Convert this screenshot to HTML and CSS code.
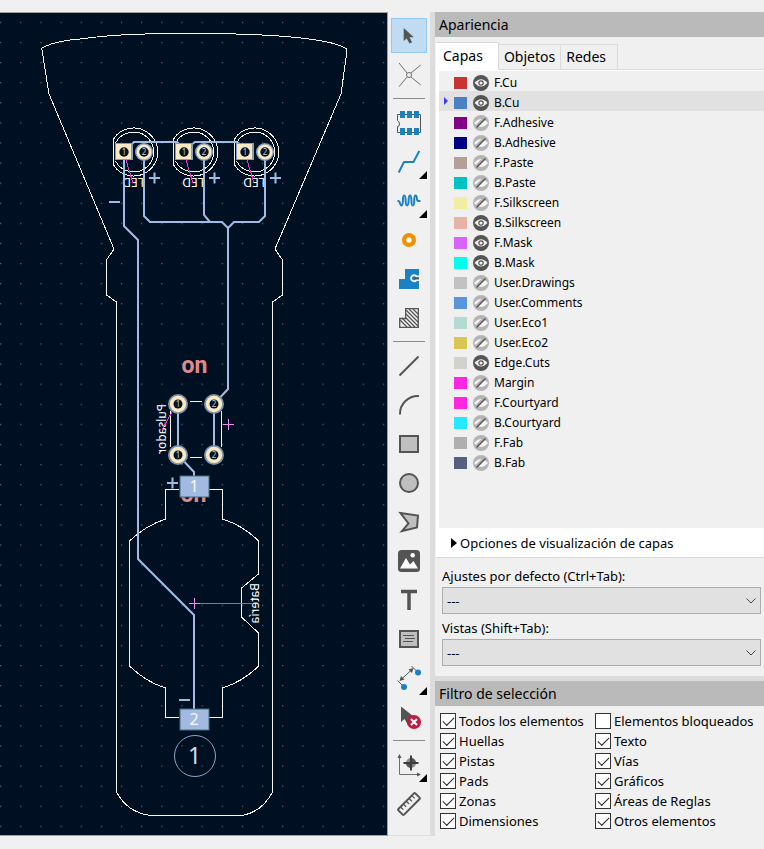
FILE: index.html
```html
<!DOCTYPE html>
<html lang="es">
<head>
<meta charset="utf-8">
<title>Editor de placas</title>
<meta name="viewport" content="width=device-width, initial-scale=1">
<link rel="stylesheet" href="styles.css">
</head>
<body>
<main class="workspace">
  <section class="board">
    <svg class="board-drawing" viewBox="0 13 387 822">
      <defs>
        <pattern id="grid" x="10.6" y="12.2" width="20.15" height="20.1" patternUnits="userSpaceOnUse">
          <rect x="9.6" y="9.6" width="1.200" height="1.200" fill="#5d6c76"/>
        </pattern>
        <g id="led">
          <path class="silk" d="M113.500 139V165M113.500 139A24 24 0 1 1 113.500 165M115.500 143A20.500 20.500 0 0 1 147 137A20.500 20.500 0 0 1 147 167A20.500 20.500 0 0 1 115.500 161"/>
        </g>
        <g id="led-pads">
          <rect x="115" y="143" width="18" height="17" fill="#86a0b8"/>
          <rect x="116" y="144" width="15" height="15" fill="#f8e9c4"/>
          <circle cx="124" cy="152" r="4.700" fill="#08131f"/>
          <circle cx="144" cy="152" r="9" fill="#86a0b8"/>
          <circle cx="144" cy="152" r="7.500" fill="#f8e9c4"/>
          <circle cx="144" cy="152" r="4.700" fill="#08131f"/>
          <text class="pin" x="124" y="155">1</text>
          <text class="pin" x="144" y="155">2</text>
          <path class="airwire" d="M126 160L133 183"/>
          <path class="mark" d="M149 178H160M154.500 172.500V183.500"/>
        </g>
        <g id="hole">
          <circle r="10" fill="#7d93a8"/>
          <circle r="8.200" fill="#f8e9c4"/>
          <circle r="4.500" fill="#08131f"/>
        </g>
      </defs>
      <rect y="13" width="387" height="822" fill="url(#grid)"/>
      <path class="edge" d="M42 50Q41 48 44 47C52 43 66 40 80 39C115 34 150 33.500 194 33.500S285 35 316 40C328 42 336 43 343 47Q347 48 347 51L341 94L275 249L282.500 260V295L272.500 302V792Q262 812 242 815.500H150Q127 812 116.500 792V302L106.500 295V260L114 249L49 94Z"/>
      <use href="#led"/><use href="#led" x="60"/><use href="#led" x="121"/>
      <g class="silk-text">
        <text transform="translate(144 178) rotate(180)">LED</text>
        <text transform="translate(204 178) rotate(180)">LED</text>
        <text transform="translate(265 178) rotate(180)">LED</text>
        <text transform="matrix(0 1 1 0 166 404)">Pulsador</text>
        <text transform="matrix(0 1 1 0 259 583)">Batería</text>
      </g>
      <text class="switch-text" x="194.500" y="373">on</text>
      <text class="switch-text" x="193.500" y="502">on</text>
      <path class="silk" d="M190 401.500H202M190 457.500H202M170.500 411V447M221.500 411V447"/>
      <path class="silk" d="M179 489.500H165.500V519Q145 526 129.500 541V666Q146 682 165.500 688V717.500H179M209 489.500H222.500V519Q244 526 258.500 541V574L241.500 588V617L258.500 633V666Q244 681 222.500 688V717.500H209"/>
      <path class="track" d="M124 160V226L138 240V559L194 615V710M144 160V216L150 222H222L228 228L234 222H259L265 216V160M204 160V215L210 222M228 228V389L214 404V455M131 145L134 142H177L180 145M191 145L195 142H237L241 145M178 404V455L194 472V477"/>
      <use href="#led-pads"/><use href="#led-pads" x="60"/><use href="#led-pads" x="121"/>
      <use href="#hole" x="178" y="404"/><use href="#hole" x="214" y="404"/>
      <use href="#hole" x="178" y="455"/><use href="#hole" x="214" y="455"/>
      <text class="pin" x="178" y="407">1</text><text class="pin" x="214" y="407">2</text>
      <text class="pin" x="178" y="458">1</text><text class="pin" x="214" y="458">2</text>
      <path class="airwire" d="M172 412L162 430M195 603.500H252"/>
      <path class="anchor" d="M223 424.500H234M228.500 419V430M189 603.500H200M194.500 598V609"/>
      <path class="mark" d="M109 202H120M167 483H178M172.500 477.500V488.500M179 700H190"/>
      <rect class="smd" x="180" y="476" width="29" height="21"/>
      <rect class="smd" x="180" y="709" width="29" height="21"/>
      <text class="smd-text" x="194" y="492">1</text>
      <text class="smd-text" x="194" y="725">2</text>
      <circle cx="195" cy="756" r="20.500" fill="none" stroke="#8ca5c4"/>
      <text class="npth-text" x="194.500" y="764">1</text>
    </svg>
  </section>

  <nav class="toolbar" aria-label="Herramientas">
    <button class="tool active" aria-label="Seleccionar"><svg viewBox="-18 -18 36 35"><path class="solid" d="M-5.300-8V5L-2.300 2.400L.5 7.600L3 6.300L.5 1.300H4.800Z"/></svg></button>
    <button class="tool" aria-label="Red de conexiones"><svg viewBox="-18 -18 36 35"><path class="thin" d="M-10-12L-2-2M11.700-10L2-2M-10 11.700L-2 2M11.700 10L2 2"/><circle class="thin" r="2.500"/></svg></button>
    <hr>
    <button class="tool" aria-label="Añadir huella"><svg viewBox="-18 -18 36 35"><path class="thin dark" d="M-11.500-8.500H11.500V9.500H-11.500V3.500Q-9.500 3.500-9.500 1T-11.500-2.500Z"/><path fill="#1a81c4" d="M-9-12h5v7h-5ZM-2-12h5v7h-5ZM5-12h5v7h-5ZM-9 5h5v7h-5ZM-2 5h5v7h-5ZM5 5h5v7h-5Z"/></svg></button>
    <button class="tool more" aria-label="Trazar pista"><svg viewBox="-18 -18 36 35"><path class="blue" d="M-10.300 10.500L-5 0H4.500L10.300-11"/></svg></button>
    <button class="tool more" aria-label="Ajustar longitud"><svg viewBox="-18 -18 36 35"><path class="blue" d="M-11.500 0H-10.500C-8.500 0-9.500 4.500-7.500 4.500C-5 4.500-7.200-5.500-4.800-5.500C-2.200-5.500-4.500 4.500-2 4.500C.800 4.500-1.500-5.500 1-5.500C3.500-5.500 1.300 4.500 3.800 4.500C6.500 4.500 4-5.500 6.500-5.500C9 -5.500 6.500 0 9.500 0H11.500"/></svg></button>
    <button class="tool" aria-label="Añadir vía"><svg viewBox="-18 -18 36 35"><circle r="4.900" fill="#fff" stroke="#f29100" stroke-width="4.300"/></svg></button>
    <button class="tool" aria-label="Añadir zona"><svg viewBox="-18 -18 36 35"><path fill="#1a81c4" d="M-10 0H-4V-10H10V10H-10Z"/><path fill="#efefef" d="M10-3.500H8A4 4 0 1 0 8 2H10Z"/><circle cx="5" cy="-.700" r="2" fill="#1a81c4"/><path d="M5-.700H10" fill="none" stroke="#545454" stroke-width="2.200"/></svg></button>
    <button class="tool" aria-label="Añadir área de reglas"><svg viewBox="-18 -18 36 35"><path class="medium" d="M-9.300.500H-3.300V-9.300H9.300V9.300H-9.300Z"/><path class="medium" d="M-9 2L-2 9M-7 0L2 9M-3 0L6 9M-3-4L9 8M-3-8L9 4M0-9L9 0M4-9L9-4"/></svg></button>
    <hr>
    <button class="tool" aria-label="Dibujar línea"><svg viewBox="-18 -18 36 35"><path class="stroke" d="M-9.500 9.500L9.500-9.500"/></svg></button>
    <button class="tool" aria-label="Dibujar arco"><svg viewBox="-18 -18 36 35"><path class="stroke" d="M-9 9.500A18 18 0 0 1 10-9"/></svg></button>
    <button class="tool" aria-label="Dibujar rectángulo"><svg viewBox="-18 -18 36 35"><rect class="shape" x="-9" y="-8" width="18" height="16"/></svg></button>
    <button class="tool" aria-label="Dibujar círculo"><svg viewBox="-18 -18 36 35"><circle class="shape" r="9"/></svg></button>
    <button class="tool" aria-label="Dibujar polígono"><svg viewBox="-18 -18 36 35"><path class="shape" d="M-8.500-9L9-6.500L8 5.500L-7 9L-.500 1.500Z"/></svg></button>
    <button class="tool" aria-label="Añadir imagen"><svg viewBox="-18 -18 36 35"><rect class="solid" x="-11" y="-11" width="22" height="22" rx="3.500"/><circle cx="3.700" cy="-5.700" r="2.200" fill="#fff"/><path fill="#fff" d="M-9 7.500L-3-3L1 3.500L4.500 0L9 7.500Z"/></svg></button>
    <button class="tool" aria-label="Añadir texto"><svg viewBox="-18 -18 36 35"><path d="M-8-8.500H8M0-8V10" fill="none" stroke="#545454" stroke-width="3.500"/></svg></button>
    <button class="tool" aria-label="Añadir cuadro de texto"><svg viewBox="-18 -18 36 35"><rect class="shape" x="-9" y="-8" width="18" height="16"/><path class="thin dark" d="M-6-3.500H5M-4-.500H6M-6 2.500H4"/></svg></button>
    <button class="tool more" aria-label="Añadir cota"><svg viewBox="-18 -18 36 35"><path class="thin dark" d="M-11.500 2.500L-5 9M2.500-12L9-5.500M-8.500 2L3-8.500"/><path class="solid" d="M-9.500 3L-8-2L-4.500 1.500ZM4.500-10L3-5L-.500-8.500Z"/><circle cx="9" cy="-5.500" r="3" fill="#1a81c4"/><circle cx="-5" cy="9" r="3" fill="#1a81c4"/></svg></button>
    <button class="tool" aria-label="Borrar elementos"><svg viewBox="-18 -18 36 35"><path class="solid" d="M-8-10.500V5L-4.500 2L-1 8L2 6V0L4-1Z"/><circle cx="5" cy="5" r="7" fill="#c2193f"/><path d="M2 2L8 8M8 2L2 8" stroke="#fff" stroke-width="2.200"/></svg></button>
    <hr>
    <button class="tool more" aria-label="Fijar origen"><svg viewBox="-18 -18 36 35"><path class="thin" d="M-9.500-8V9.500H9"/><path class="solid" d="M-9.500-11L-7.500-7H-11.500ZM12 9.500L8 7.500V11.500Z"/><circle cx="2" cy="-2" r="5" fill="#8a8a8a"/><path class="solid" d="M2-2V-7A5 5 0 0 1 7-2ZM2-2V3A5 5 0 0 1-3-2Z"/><path d="M-5.500-2H9.500M2-9.500V5.500" stroke="#3c3c3c" stroke-width="2"/></svg></button>
    <button class="tool" aria-label="Medir"><svg viewBox="-18 -18 36 35"><g transform="rotate(-45)"><rect x="-12" y="-4" width="24" height="8" rx="1" fill="none" stroke="#545454" stroke-width="2"/><path class="medium" d="M-8-3.500V0M-4-3.500V0M0-3.500V0M4-3.500V0M8-3.500V0"/></g></svg></button>
  </nav>

  <aside class="side">
    <section class="appearance">
      <h2 class="title">Apariencia</h2>
      <div class="tabs" role="tablist">
        <button class="tab selected" role="tab" aria-selected="true">Capas</button>
        <button class="tab" role="tab" aria-selected="false">Objetos</button>
        <button class="tab" role="tab" aria-selected="false">Redes</button>
      </div>
      <div class="page">
        <ul class="layers" id="layers"></ul>
        <button class="options"><svg viewBox="0 0 6 10"><path d="M0 0L6 5L0 10Z"/></svg>Opciones de visualización de capas</button>
      </div>
      <div class="presets">
        <label for="preset">Ajustes por defecto (Ctrl+Tab):</label>
        <div class="select"><select id="preset"><option>---</option></select><svg viewBox="0 0 10 6"><path d="M.5.500L5 5L9.500.500"/></svg></div>
        <label for="viewport">Vistas (Shift+Tab):</label>
        <div class="select"><select id="viewport"><option>---</option></select><svg viewBox="0 0 10 6"><path d="M.5.500L5 5L9.500.500"/></svg></div>
      </div>
    </section>
    <section class="filter">
      <h2 class="title">Filtro de selección</h2>
      <div class="checks">
        <label><input type="checkbox" checked>Todos los elementos</label>
        <label><input type="checkbox">Elementos bloqueados</label>
        <label><input type="checkbox" checked>Huellas</label>
        <label><input type="checkbox" checked>Texto</label>
        <label><input type="checkbox" checked>Pistas</label>
        <label><input type="checkbox" checked>Vías</label>
        <label><input type="checkbox" checked>Pads</label>
        <label><input type="checkbox" checked>Gráficos</label>
        <label><input type="checkbox" checked>Zonas</label>
        <label><input type="checkbox" checked>Áreas de Reglas</label>
        <label><input type="checkbox" checked>Dimensiones</label>
        <label><input type="checkbox" checked>Otros elementos</label>
      </div>
    </section>
  </aside>
</main>
<script src="layers.js"></script>
</body>
</html>
```
FILE: layers.js
```js
// Layer name, colour, visibility
const layers = [
  ["F.Cu", "#c83434", true], ["B.Cu", "#4d7fc4", true],
  ["F.Adhesive", "#840084", false], ["B.Adhesive", "#000084", false],
  ["F.Paste", "#b4a09a", false], ["B.Paste", "#00c2c2", false],
  ["F.Silkscreen", "#f2eda1", false], ["B.Silkscreen", "#e8b2a7", true],
  ["F.Mask", "#d864ff", true], ["B.Mask", "#02ffee", true],
  ["User.Drawings", "#c2c2c2", false], ["User.Comments", "#5994dc", false],
  ["User.Eco1", "#b4dbd2", false], ["User.Eco2", "#d8c852", false],
  ["Edge.Cuts", "#d0d2cd", true], ["Margin", "#ff26e2", false],
  ["F.Courtyard", "#ff26e2", false], ["B.Courtyard", "#26e9ff", false],
  ["F.Fab", "#afafaf", false], ["B.Fab", "#585d84", false]
];

const shown = '<circle cx="8" cy="8" r="8" fill="#545454"/><path d="M1.500 8Q8 .5 14.500 8Q8 15 1.500 8Z" fill="#f0f0f0"/><circle cx="8" cy="8" r="2.200" fill="#f0f0f0" stroke="#545454" stroke-width="1.200"/>';
const hidden = '<circle cx="8" cy="8" r="8" fill="#b4b4b4"/><path d="M1 8Q8 0 15 8Q8 16 1 8Z" fill="#f4f4f4"/><path d="M2 12.500L12 2.500" stroke="#b4b4b4" stroke-width="2.500"/><path d="M3.500 12.500L12.500 3.500" stroke="#545454" stroke-width="1.400"/>';

document.getElementById("layers").innerHTML = layers.map(([name, color, visible]) => `
  <li class="layer${name === "B.Cu" ? " current" : ""}">
    <span class="swatch" style="background:${color}"></span>
    <button class="eye" aria-label="${name}" aria-pressed="${visible}"><svg viewBox="0 0 16 16">${visible ? shown : hidden}</svg></button>
    <span>${name}</span>
  </li>`).join("");
```
FILE: styles.css
```css
* {
  box-sizing: border-box;
}

body {
  margin: 0;
  min-height: 100vh;
  display: flex;
  padding: 12px 0 13px;
  background: #f0f0f0;
  color: #000;
  font: 13px/20px "Noto Sans", "Open Sans", sans-serif;
}

button {
  padding: 0;
  border: 0;
  background: none;
  color: inherit;
  font: inherit;
}

svg {
  display: block;
}

.workspace {
  flex: 1;
  display: flex;
}

/* Board canvas */
.board {
  flex: 1;
  min-width: 0;
  border: solid #a0a0a0;
  border-width: 1px 1px 1px 0;
  background: #001023;
}

.board-drawing {
  width: 100%;
  height: auto;
}

.edge,
.silk,
.track,
.mark,
.airwire,
.anchor {
  fill: none;
}

.edge,
.silk {
  stroke: #f6f6f6;
  shape-rendering: crispEdges;
}

.track,
.mark {
  stroke: #a0bbe4;
  stroke-width: 2;
}

.airwire {
  stroke: #f032dc;
  shape-rendering: crispEdges;
}

.anchor {
  stroke: #f58cf0;
}

.silk-text {
  fill: #fff;
  font-family: "Noto Sans", sans-serif;
  font-size: 12px;
}

.pin,
.switch-text,
.smd-text,
.npth-text {
  text-anchor: middle;
}

.pin {
  fill: #b8c8d4;
  font-size: 8px;
}

.switch-text {
  fill: #e08a8a;
  font-family: Roboto, sans-serif;
  font-size: 23px;
  font-weight: 700;
}

.smd {
  fill: #a2bae2;
  stroke: #41707c;
}

.smd-text {
  fill: #f4f6fa;
  font-size: 16px;
}

.npth-text {
  fill: #d4dcea;
  font-size: 23px;
}

/* Tool column */
.toolbar {
  width: 42px;
  display: flex;
  flex-direction: column;
  align-items: center;
  gap: 4px;
  padding-top: 6px;
  border-bottom: 1px solid #dcdcdc;
}

.toolbar hr {
  width: 32px;
  height: 1px;
  margin: 2px 0;
  border: 0;
  background: #8c8c8c;
}

.tool {
  position: relative;
  width: 36px;
  height: 35px;
}

.active {
  background: #c0dcf3;
  outline: 1px solid #90c8f6;
  outline-offset: -1px;
}

.more::after {
  content: "";
  position: absolute;
  right: 0;
  bottom: 0;
  border: 4px solid #000;
  border-top-color: transparent;
  border-left-color: transparent;
}

.solid {
  fill: #545454;
}

.thin,
.medium,
.stroke,
.blue {
  fill: none;
  stroke: #6e6e6e;
}

.dark {
  stroke: #545454;
}

.medium {
  stroke: #545454;
  stroke-width: 1.3;
}

.stroke {
  stroke: #545454;
  stroke-width: 2;
}

.blue {
  stroke: #1a81c4;
  stroke-width: 2;
}

.shape {
  fill: #bfbfbf;
  stroke: #545454;
  stroke-width: 2;
}

/* Side panels */
.side {
  width: 334px;
  display: flex;
  flex-direction: column;
  gap: 5px;
  border-left: 5px solid #dcdcdc;
  background: #dcdcdc;
}

.appearance {
  flex: 1;
  display: flex;
  flex-direction: column;
  background: #f0f0f0;
}

.filter {
  background: #f0f0f0;
}

.title {
  margin: 0;
  padding: 0 4px;
  background: #bababa;
  font-size: 14px;
  font-weight: 400;
  line-height: 25px;
}

.tabs {
  display: flex;
  align-items: flex-end;
  margin: 5px 0 0 1px;
  font-size: 14px;
}

.tabs::after {
  content: "";
  flex: 1;
  border-bottom: 1px solid #dadada;
}

.tabs::after,
.tab {
  height: 26px;
}

.tab {
  padding: 0 5px;
  border: solid #dadada;
  border-width: 1px 1px 1px 0;
}

.tab:last-child {
  padding-right: 11px;
}

.selected {
  height: 28px;
  padding: 0 15px 2px 7px;
  border-bottom: 0;
  background: #fff;
}

.page {
  flex: 1;
  display: flex;
  flex-direction: column;
  margin-left: 1px;
  padding: 1px 0 0 3px;
  border-bottom: 1px solid #dadada;
  background: #fff;
}

.layers {
  flex: 1;
  margin: 0;
  padding: 0;
  background: #f0f0f0;
  list-style: none;
}

.layer {
  position: relative;
  display: flex;
  align-items: center;
  gap: 6px;
  height: 20px;
  padding: 3px 0 0 15px;
  font-size: 12px;
}

.current {
  background: #e1e1e1;
}

.current::before {
  content: "";
  position: absolute;
  left: 5px;
  top: 6px;
  border: 4px solid transparent;
  border-left-color: #3c3cff;
  border-right-width: 0;
}

.swatch {
  width: 13px;
  height: 12px;
}

.eye {
  width: 16px;
  height: 16px;
}

.layer span:last-child {
  margin-left: -1px;
}

.options {
  display: flex;
  align-items: center;
  gap: 3px;
  height: 29px;
  padding-left: 12px;
}

.options svg {
  width: 6px;
  height: 10px;
}

.presets {
  display: grid;
  padding: 8px 3px 6px 7px;
}

.presets label {
  padding-bottom: 1px;
}

.select {
  display: grid;
  align-items: center;
  margin-bottom: 4px;
}

.select select,
.select svg {
  grid-area: 1 / 1;
}

.select select {
  height: 27px;
  padding: 0 4px;
  appearance: none;
  border: 1px solid #adadad;
  border-radius: 0;
  background: #e1e1e1;
  color: inherit;
  font: inherit;
}

.select svg {
  width: 10px;
  justify-self: end;
  margin-right: 5px;
  pointer-events: none;
  fill: none;
  stroke: #444;
}

/* Selection filter */
.checks {
  display: grid;
  grid-template-columns: 155px 1fr;
  padding: 5px 4px 5px 5px;
}

.checks label {
  display: flex;
  align-items: center;
  gap: 3px;
  white-space: nowrap;
}

.checks input {
  display: grid;
  place-items: center;
  width: 16px;
  height: 16px;
  margin: 0;
  appearance: none;
  border: 1px solid #333;
  background: #fff;
}

.checks input:checked::before {
  content: "";
  width: 10px;
  height: 5px;
  margin-bottom: 3px;
  border: solid #222;
  border-width: 0 0 1px 1px;
  rotate: -45deg;
}
```
